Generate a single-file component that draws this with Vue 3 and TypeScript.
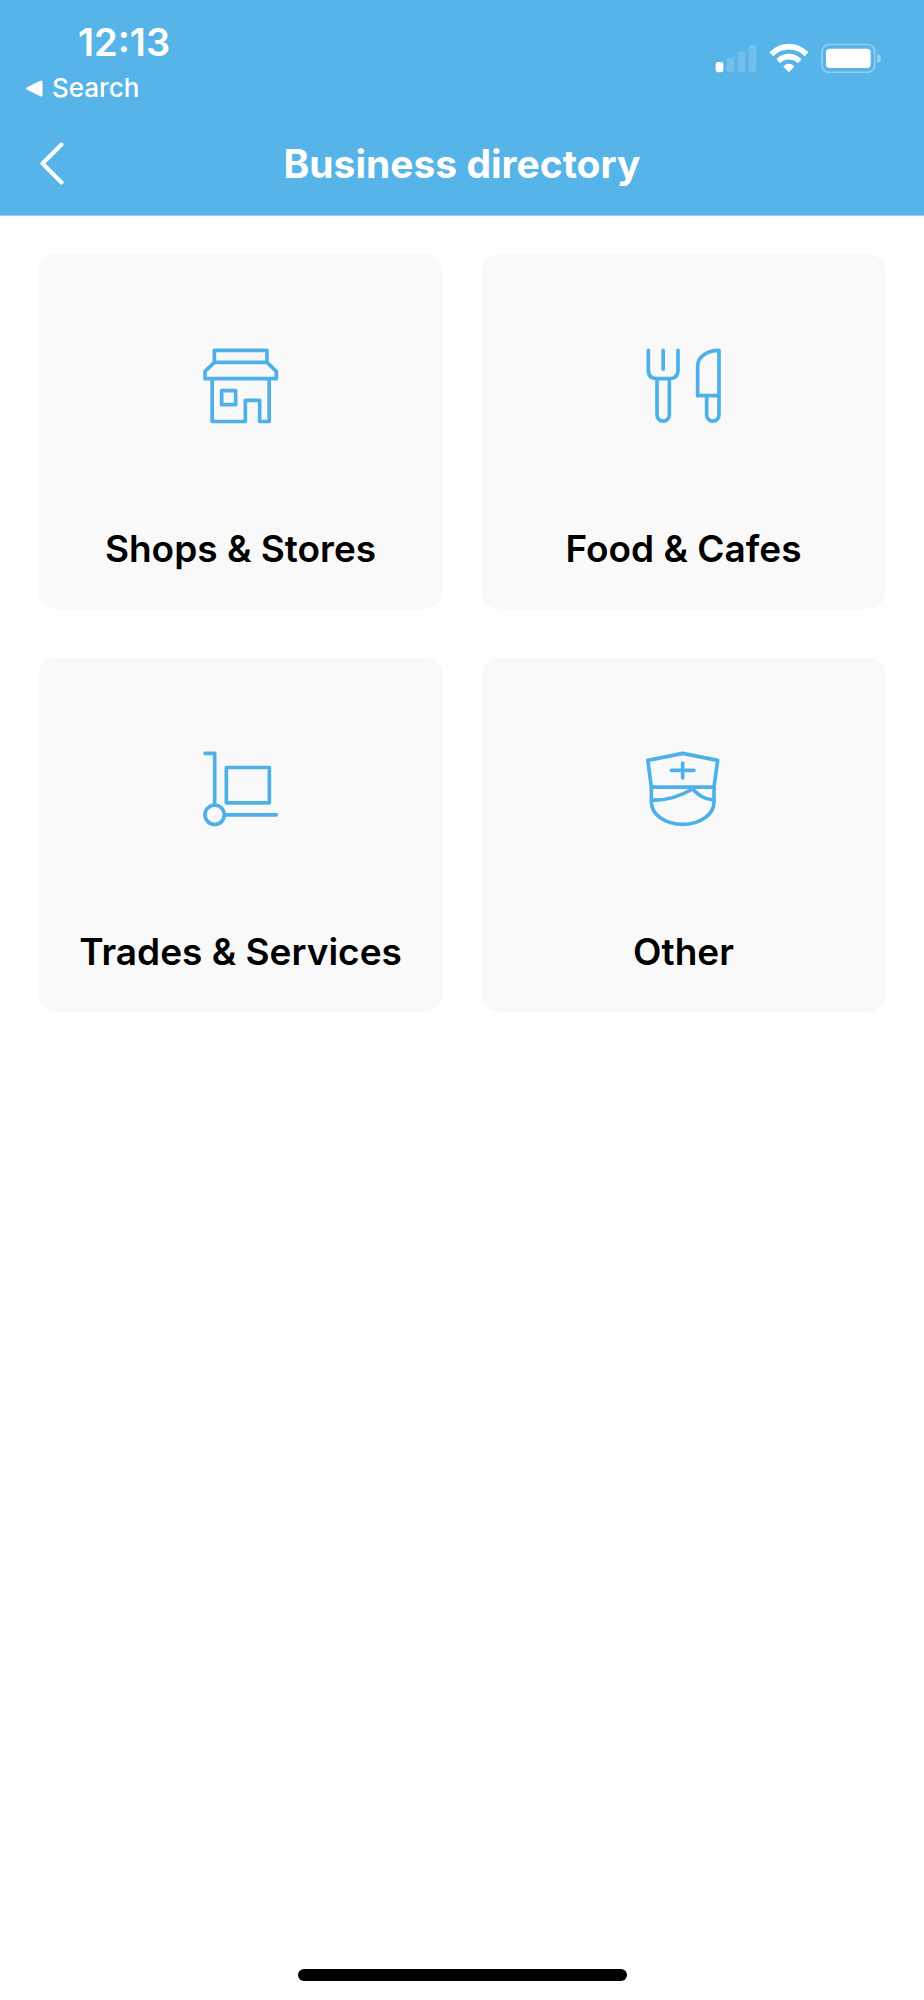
<script setup lang="ts">
type IconName = 'shop' | 'food' | 'trolley' | 'nurse'

interface Category {
  label: string
  icon: IconName
  viewBox: string
}

const categories: Category[] = [
  { label: 'Shops & Stores', icon: 'shop', viewBox: '37 34 234 234' },
  { label: 'Food & Cafes', icon: 'food', viewBox: '34 34 234 234' },
  { label: 'Trades & Services', icon: 'trolley', viewBox: '37 28 234 234' },
  { label: 'Other', icon: 'nurse', viewBox: '34 28 234 234' },
]
</script>

<template>
  <div class="screen">
    <header class="header">
      <div class="status">
        <div class="status-left">
          <time class="clock">12:13</time>
          <button class="return" type="button">
            <svg class="return-arrow" viewBox="0 0 17 17" aria-hidden="true">
              <path d="M1.2 7.2 14.2 .7Q16.5 0 16.5 2.2V14.8Q16.5 17 14.2 16.3L1.2 9.8Q-.8 8.5 1.2 7.2Z" fill="currentColor" />
            </svg>
            <span>Search</span>
          </button>
        </div>
        <div class="status-right">
          <svg class="signal" viewBox="76 69 126 90" role="img" aria-label="Mobile signal">
            <rect x="78" y="126" width="23" height="31" rx="7" fill="#fff" />
            <g fill="#fff" fill-opacity=".17">
              <rect x="111" y="113" width="23" height="44" rx="7" />
              <rect x="144" y="94" width="23" height="63" rx="7" />
              <rect x="177" y="75" width="23" height="82" rx="7" />
            </g>
          </svg>
          <svg class="wifi" viewBox="237 69 120 90" role="img" aria-label="Wi-Fi">
            <g fill="#fff">
              <path d="M239.500 95.500Q264 71 296.500 71T354 95.500Q355.500 97 354 98.500L345.500 107Q344 108.500 342.500 107Q323 88.500 296.500 88.500T251.500 107Q250 108.500 248.500 107L239.500 98.500Q238 97 239.500 95.500Z" />
              <path d="M260.500 116.500Q276 101.500 296.500 101.500T333 116.500Q334.500 118 333 119.500L324.500 128Q323 129.500 321.500 128Q311 118.500 296.500 118.500T272 128Q270.500 129.500 269 128L260.500 119.500Q259 118 260.500 116.500Z" />
              <path d="M281 138Q288 131.500 296.500 131.500T312 138Q313.500 139.500 312 141L298 155.500Q296.500 157 295 155.500L281 141Q279.500 139.500 281 138Z" />
            </g>
          </svg>
          <svg class="battery" viewBox="392 69 183 90" role="img" aria-label="Battery">
            <rect x="395" y="73.500" width="158" height="83.500" rx="21" fill="none" stroke="#fff" stroke-opacity=".36" stroke-width="5" />
            <rect x="407" y="86" width="134" height="58" rx="11" fill="#fff" />
            <path d="M561 102Q572 105 572 115.500T561 129Z" fill="#fff" fill-opacity=".42" />
          </svg>
        </div>
      </div>
      <div class="nav">
        <button class="back" type="button" aria-label="Back">
          <svg viewBox="0 0 24 44" aria-hidden="true">
            <path d="M21.500 2.500 2.500 21.500 21.500 40.500" fill="none" stroke="currentColor" stroke-width="4" stroke-linecap="round" stroke-linejoin="round" />
          </svg>
        </button>
        <h1 class="title">Business directory</h1>
      </div>
    </header>

    <main class="grid">
      <a v-for="item in categories" :key="item.icon" class="card" href="#">
        <svg class="card-icon" :viewBox="item.viewBox" aria-hidden="true">
          <template v-if="item.icon === 'shop'">
            <path d="M74 83V47H232V83M74 83H232L260 110V132H46V110ZM67.500 132V260.500H167V197H210V260.500H238.500V132" />
            <rect x="96" y="168" width="42" height="42" />
          </template>
          <template v-else-if="item.icon === 'food'">
            <path d="M44 47V106Q44 132 70 132H106Q133 132 133 106V47M88.500 47V104M70 132V241A18 18 0 0 0 107 241V132" />
            <path d="M256 47V241A18 18 0 0 1 219 241V183M256 183H192V94C192 66 220 47 256 47Z" />
          </template>
          <template v-else-if="item.icon === 'trolley'">
            <path d="M46 41H75V194M106 225.500H260" />
            <rect x="110" y="83.500" width="129" height="106" />
            <circle cx="75" cy="225.500" r="29" />
          </template>
          <template v-else>
            <path d="M42.500 62 147 41 252 62 241 142V186C241 226 198 254 147 254S53 226 53 186V142Z" />
            <path d="M53 142.500H241M113 92H181M147 70V115M54 181C105 184 142 168 177 148C196 167 208 178 240 181" />
          </template>
        </svg>
        <span class="card-label">{{ item.label }}</span>
      </a>
    </main>

    <footer class="home">
      <div class="home-indicator"></div>
    </footer>
  </div>
</template>

<style>
body {
  background: #fff;
}
</style>

<style scoped>
.screen {
  display: flex;
  flex-direction: column;
  min-height: 100vh;
  font-family: Inter, "Liberation Sans", sans-serif;
  color: #000;
}

.header {
  background: #57b4e8;
  border-bottom: 1px solid #9acbf0;
  color: #fff;
}

.status {
  display: flex;
  justify-content: space-between;
  align-items: flex-start;
  height: 112px;
  box-sizing: border-box;
  padding: 22px 42px 0 26px;
}

.status-left {
  display: flex;
  flex-direction: column;
  align-items: flex-start;
  gap: 10px;
}

.clock {
  padding-left: 52px;
  font-size: 38px;
  line-height: 40px;
  font-weight: 600;
}

.return {
  display: flex;
  align-items: center;
  gap: 9px;
  padding: 0;
  border: 0;
  background: none;
  color: inherit;
  font: inherit;
  font-size: 26px;
  line-height: 32px;
  font-weight: 500;
}

.return-arrow {
  width: 17px;
  height: 17px;
}

.status-right {
  display: flex;
  gap: 12px;
  padding-top: 21px;
}

.status-right svg {
  height: 30px;
}

.signal {
  width: 42px;
}

.wifi {
  width: 40px;
}

.battery {
  width: 61px;
}

.nav {
  display: grid;
  grid-template-columns: 1fr auto 1fr;
  align-items: center;
  height: 103px;
  padding: 0 40px;
}

.back {
  justify-self: start;
  display: flex;
  padding: 0;
  border: 0;
  background: none;
  color: inherit;
}

.back svg {
  width: 24px;
  height: 44px;
}

.title {
  margin: 0;
  font-size: 39px;
  line-height: 48px;
  font-weight: 700;
}

.grid {
  display: grid;
  grid-template-columns: 1fr 1fr;
  gap: 48px 38px;
  padding: 38px;
}

.card {
  display: flex;
  flex-direction: column;
  align-items: center;
  gap: 103px;
  padding: 92px 12px 38px;
  border-radius: 19px;
  background: #f9f9f9;
  color: inherit;
  text-decoration: none;
}

.card-icon {
  width: 78px;
  height: 78px;
  fill: none;
  stroke: #4eb0e8;
  stroke-width: 11;
  stroke-linecap: round;
  stroke-linejoin: round;
}

.card-label {
  font-size: 37px;
  line-height: 44px;
  font-weight: 600;
  text-align: center;
}

.home {
  margin-top: auto;
  padding: 19px 0;
}

.home-indicator {
  width: 329px;
  height: 12px;
  margin: 0 auto;
  border-radius: 6px;
  background: #000;
}
</style>
